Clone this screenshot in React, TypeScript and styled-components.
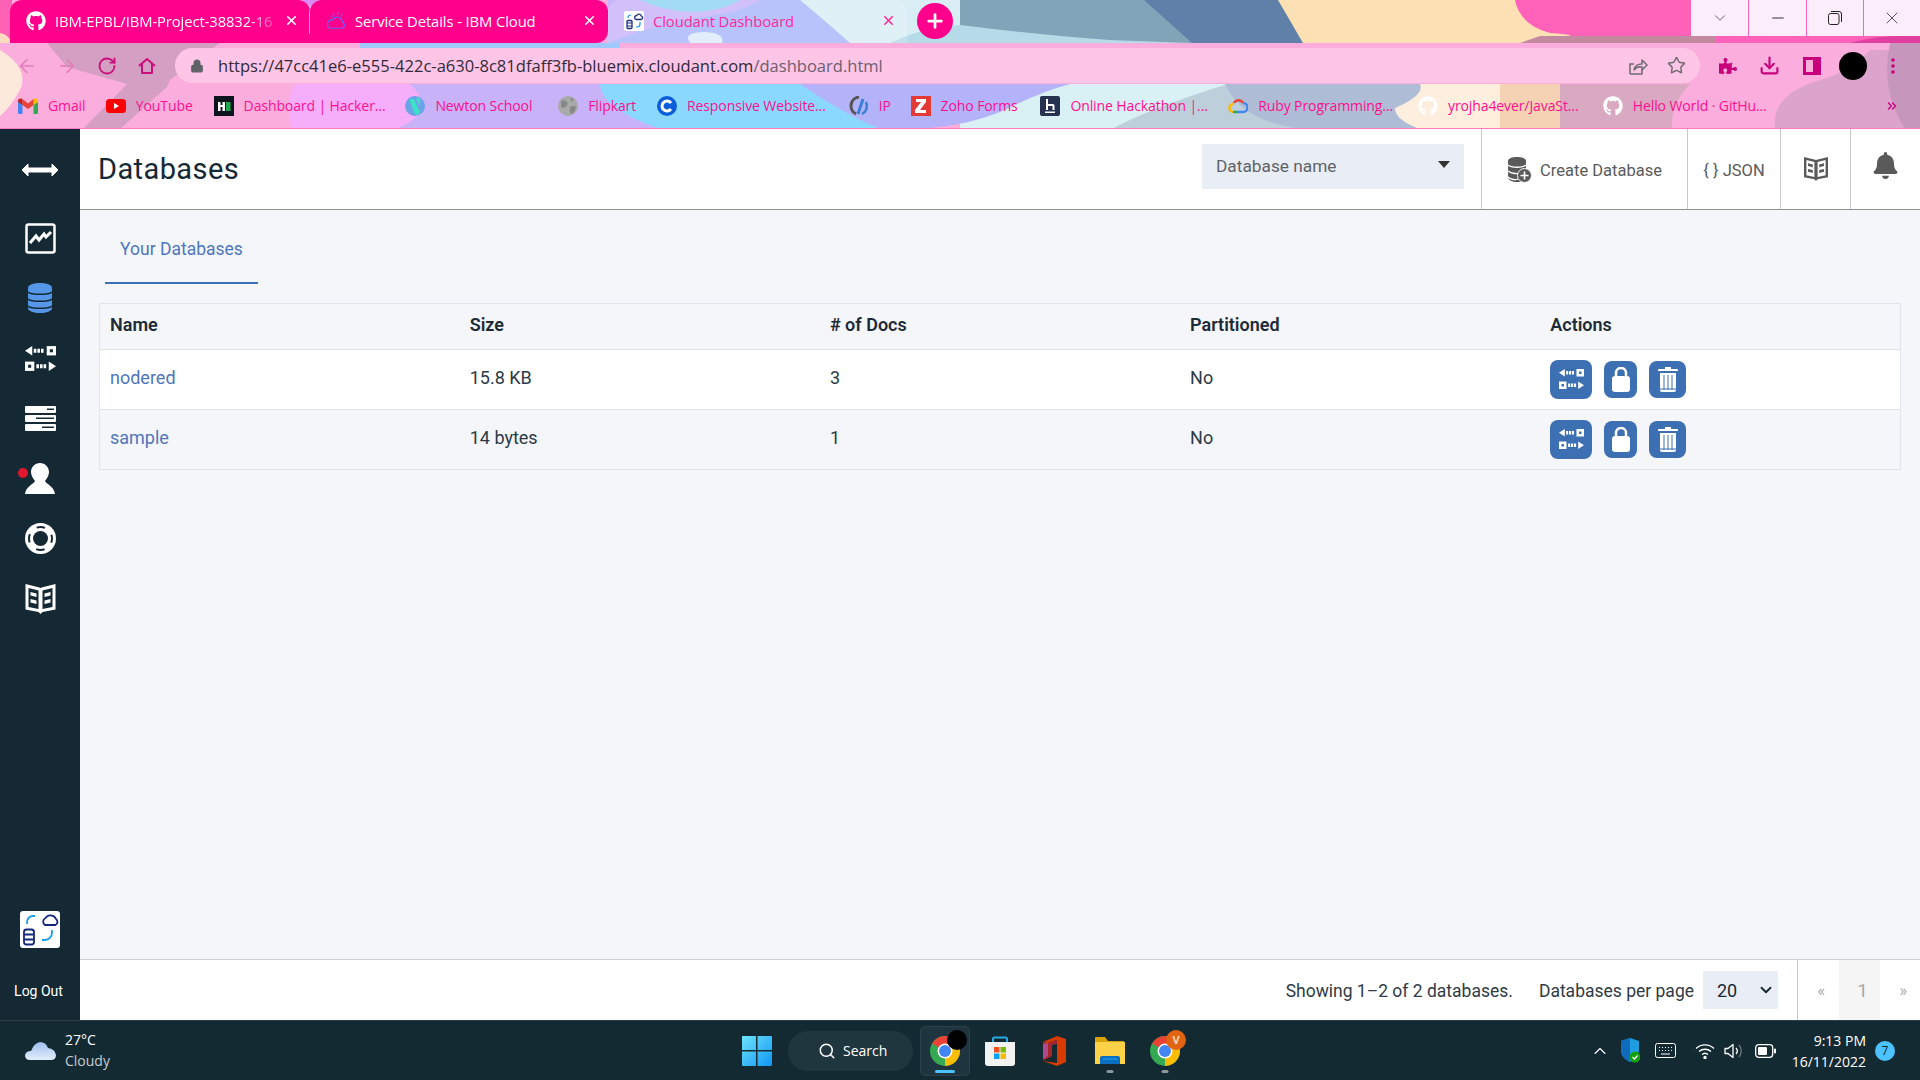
import React from "react";
import styled, { createGlobalStyle } from "styled-components";
import { FaGithub, FaBell, FaPuzzlePiece } from "react-icons/fa";
import { ArrowLeft, ArrowRight, RotateCw, Star, Download, X, Plus, Minus, ChevronDown, ChevronUp, Search, Lock, ChevronsRight } from "lucide-react";

const plex = `Roboto, "Noto Sans", sans-serif`;
const segoe = `"Open Sans", "Noto Sans", sans-serif`;

const Global = createGlobalStyle`
  html, body { margin: 0; padding: 0; width: 1920px; height: 1080px; overflow: hidden; background: #f5f6fa; }
  * { box-sizing: border-box; }
`;

const Page = styled.div`
  width: 1920px; height: 1080px; display: flex; flex-direction: column; overflow: hidden; font-family: ${plex};
`;

/* ---------- browser chrome ---------- */
const Chrome = styled.header`
  position: relative; height: 129px; flex: none; overflow: hidden; font-family: ${segoe};
`;
const WallpaperArt = styled.svg`
  position: absolute; left: 0; top: 0; width: 1920px; height: 130px;
`;
const TabStrip = styled.div`
  position: relative; height: 43px; display: flex; align-items: flex-start; padding-left: 10px;
`;
const Tab = styled.div<{ $w: number; $active?: boolean; $radius: string; $divider?: boolean }>`
  position: relative; width: ${p => p.$w}px; height: 43px; display: flex; align-items: center; padding: 0 11px 2px 16px; gap: 9px;
  border-radius: ${p => p.$radius};
  background: ${p => (p.$active ? "rgba(255,255,255,0.18)" : "#ff008c")};
  color: ${p => (p.$active ? "#ff2a9c" : "#fff")};
  &::before {
    content: ""; display: ${p => (p.$divider ? "block" : "none")}; position: absolute; left: -1px; top: 10px; width: 1px; height: 24px; background: #ff8ccb;
  }
`;
const TabIconSlot = styled.span`
  width: 20px; height: 20px; flex: none; display: flex; align-items: center; justify-content: center;
`;
const TabTitle = styled.span<{ $fade?: boolean }>`
  flex: 1; min-width: 0; white-space: nowrap; font-size: 14.8px; letter-spacing: -0.1px;
  ${p => (p.$fade ? "mask-image: linear-gradient(90deg, #000 88%, rgba(0,0,0,0.25));" : "")}
`;
const TabClose = styled.span`
  flex: none; display: flex; align-items: center; justify-content: center; width: 16px; height: 16px;
`;
const NewTab = styled.div`
  width: 36px; height: 36px; margin: 3px 0 0 10px; border-radius: 50%; background: #ff008c; color: #fff;
  display: flex; align-items: center; justify-content: center;
`;
const WindowButtons = styled.div`
  margin-left: auto; height: 36px; display: flex; background: #fbeefa;
`;
const WindowButton = styled.div<{ $divider?: boolean; $w: number }>`
  width: ${p => p.$w}px; height: 36px; display: flex; align-items: center; justify-content: center; color: #333;
  border-left: ${p => (p.$divider ? "1px solid #f565b8" : "none")};
`;

const ToolRow = styled.div`
  position: relative; height: 43px; display: flex; align-items: center; padding: 2px 0 0 0;
`;
const NavGroup = styled.div`
  width: 175px; flex: none; display: flex; align-items: center; padding-left: 14px; gap: 14px;
`;
const NavButton = styled.span<{ $off?: boolean }>`
  width: 26px; height: 26px; display: flex; align-items: center; justify-content: center;
  color: ${p => (p.$off ? "#e27cb6" : "#c80f7c")};
`;
const AddressBar = styled.div`
  width: 1525px; height: 35px; flex: none; border-radius: 18px; background: #fec5e6; display: flex; align-items: center; padding: 0 4px 0 15px; color: #5f6368;
`;
const UrlText = styled.span`
  margin-left: 14px; flex: 1; font-size: 16.55px; white-space: nowrap; color: #2f2a3a;
`;
const UrlPath = styled.span`
  color: #6b5f70;
`;
const BarAction = styled.span`
  width: 39px; display: flex; justify-content: center; color: #6e6a70;
`;
const ToolActions = styled.div`
  flex: 1; display: flex; align-items: center; padding-left: 10px; color: #c8007c;
`;
const ToolAction = styled.span<{ $w: number }>`
  width: ${p => p.$w}px; display: flex; justify-content: center; align-items: center;
`;
const Avatar = styled.span`
  width: 28px; height: 28px; border-radius: 50%; background: #000; display: block;
`;

const BookmarkBar = styled.nav`
  position: relative; height: 43px; display: flex; align-items: center; padding: 0 0 3px 18px; gap: 20.8px; border-bottom: 1px solid #fb78c4;
`;
const Bookmark = styled.span`
  display: flex; align-items: center; gap: 10px; color: #ff0f8f; font-size: 14px; white-space: nowrap;
`;
const BookmarkLabel = styled.span<{ $w: number }>`
  width: ${p => p.$w}px; display: block; overflow: visible; letter-spacing: -0.1px;
`;
const MoreBookmarks = styled.span`
  margin-left: auto; margin-right: 21px; color: #c8007c; display: flex;
`;

/* ---------- app ---------- */
const AppBody = styled.div`
  flex: 1; min-height: 0; display: flex;
`;
const Sidebar = styled.aside`
  width: 80px; flex: none; background: #152935; color: #fff; display: flex; flex-direction: column; align-items: center;
`;
const SideToggle = styled.div`
  height: 79px; width: 80px; padding-top: 2px; display: flex; align-items: center; justify-content: center;
`;
const SideItem = styled.div`
  position: relative; height: 60px; width: 80px; display: flex; align-items: center; justify-content: center;
`;
const RedDot = styled.span`
  position: absolute; left: 18px; top: 20px; width: 10px; height: 10px; border-radius: 50%; background: #e0182d;
`;
const SideBottom = styled.div`
  margin-top: auto; display: flex; flex-direction: column; align-items: center; padding-bottom: 20px; gap: 34px;
`;
const LogOut = styled.span`
  font-size: 14px; font-family: ${plex}; line-height: 18px; margin-left: -3px;
`;

const Main = styled.main`
  flex: 1; min-width: 0; display: flex; flex-direction: column; background: #f5f6fa;
`;
const TopBar = styled.div`
  height: 81px; flex: none; display: flex; align-items: stretch; background: #fff; border-bottom: 1px solid #8f9294;
`;
const Title = styled.h1`
  flex: 1; margin: 0; padding: 0 0 1px 18px; align-self: center; font-size: 29px; font-weight: 400; color: #152935; letter-spacing: 0.4px;
`;
const DbSelect = styled.div`
  align-self: flex-start; margin: 15px 17px 0 0; width: 262px; height: 45px; background: #e9eef6; display: flex; align-items: center; justify-content: space-between;
  padding: 0 14px 2px; color: #5f6368; font-size: 17.3px;
`;
const Caret = styled.span`
  width: 0; height: 0; border-left: 6px solid transparent; border-right: 6px solid transparent; border-top: 7px solid #333; margin-top: -2px;
`;
const HeaderCell = styled.div<{ $w: number }>`
  width: ${p => p.$w}px; flex: none; border-left: 1px solid #c9c9c9; display: flex; align-items: center; justify-content: center; gap: 8px; padding-top: 2px;
  color: #5a5a5a; font-size: 16.5px;
`;
const Pad = styled.span<{ $top: number }>`
  display: flex; margin-top: ${p => p.$top}px;
`;

const ContentTabs = styled.div`
  height: 74px; flex: none; padding-left: 25px; display: flex;
`;
const ContentTab = styled.div`
  width: 153px; height: 74px; display: flex; justify-content: center; padding-top: 29px; font-size: 17.5px; color: #4f76bb; border-bottom: 2px solid #3d70b2;
`;
const TableWrap = styled.div`
  margin: 19px 19px 0 19px; flex: none;
`;
const DbTable = styled.table`
  width: 100%; table-layout: fixed; border-collapse: collapse; border: 1px solid #e1e4ea; font-size: 18px; color: #2c3a45;
`;
const HeadRow = styled.tr`
  height: 46px; border-bottom: 1px solid #dfe2e6;
`;
const Th = styled.th`
  text-align: left; padding: 0 10px 4px; font-weight: 600; font-size: 18px; color: #1d2b36;
`;
const Row = styled.tr<{ $alt?: boolean }>`
  height: 60px; background: ${p => (p.$alt ? "#f5f6fa" : "#fff")}; border-bottom: 1px solid #dfe2e6;
`;
const Td = styled.td`
  padding: 0 10px 4px;
`;
const DbLink = styled.a`
  color: #4f76bb; text-decoration: none;
`;
const Actions = styled.div`
  display: flex; gap: 12px; align-items: center; margin-top: 3px;
`;
const ActionBtn = styled.span<{ $w: number; $h: number }>`
  width: ${p => p.$w}px; height: ${p => p.$h}px; border-radius: 8px; background: #3d70b2; display: flex; align-items: center; justify-content: center;
`;
const Footer = styled.div`
  margin-top: auto; height: 61px; flex: none; background: #fff; border-top: 1px solid #cfcfcf; display: flex; align-items: stretch; justify-content: flex-end;
  font-size: 17.5px; color: #2f3b45;
`;
const FooterText = styled.span<{ $mr: number }>`
  align-self: center; margin: 2px ${p => p.$mr}px 0 0; white-space: nowrap;
`;
const PerPage = styled.div`
  align-self: center; width: 75px; height: 38px; background: #e9eef6; margin-right: 19px; display: flex; align-items: center; justify-content: space-between; padding: 0 3px 0 14px; color: #152935; font-size: 18px;
`;
const Pager = styled.div`
  width: 123px; border-left: 1px solid #c9c9c9; display: flex; align-items: stretch;
`;
const PageCell = styled.span<{ $w: number; $current?: boolean }>`
  width: ${p => p.$w}px; display: flex; align-items: center; justify-content: center; color: #a9a9a9; padding-left: 6px;
  background: ${p => (p.$current ? "#f5f5f5" : "transparent")}; font-size: ${p => (p.$current ? 19 : 17)}px;
`;

/* ---------- taskbar ---------- */
const Taskbar = styled.footer`
  position: relative; height: 60px; flex: none; background: #142a32; border-top: 1px solid #2c3d46; color: #fff; display: flex; align-items: center; font-family: ${segoe};
`;
const Weather = styled.div`
  width: 742px; flex: none; display: flex; align-items: center; padding-left: 25px; gap: 9px;
`;
const WeatherText = styled.div`
  display: flex; flex-direction: column; font-size: 14px; line-height: 21px; margin-top: -1px;
`;
const Muted = styled.span`
  color: #c3cccf;
`;
const Center = styled.div`
  display: flex; align-items: center;
`;
const SearchPill = styled.div`
  margin: 0 7px 0 16px; width: 125px; height: 40px; border-radius: 20px; background: #20363f; display: flex; align-items: center; padding-left: 30px; gap: 7px; font-size: 14px;
`;
const AppSlot = styled.div<{ $w: number; $hover?: boolean }>`
  position: relative; width: ${p => p.$w}px; height: 50px; display: flex; align-items: center; justify-content: center; border-radius: 5px;
  background: ${p => (p.$hover ? "#1e3540" : "transparent")};
  border: ${p => (p.$hover ? "1px solid #2b424c" : "1px solid transparent")};
`;
const Running = styled.span<{ $active?: boolean }>`
  position: absolute; left: 50%; bottom: 2px; transform: translateX(-50%); height: 3px; border-radius: 2px;
  width: ${p => (p.$active ? 20 : 7)}px; background: ${p => (p.$active ? "#4cc2ff" : "#8b979c")};
`;
const BlackDot = styled.span`
  position: absolute; left: 26px; top: 3px; width: 20px; height: 20px; border-radius: 50%; background: #000;
`;
const OrangeBadge = styled.span`
  position: absolute; left: 25px; top: 3px; width: 20px; height: 20px; border-radius: 50%; background: #e06414; color: #fbd9b8; font-size: 11px; font-weight: 700; display: flex; align-items: center; justify-content: center;
`;
const Tray = styled.div`
  margin-left: auto; display: flex; align-items: center;
`;
const TrayIcon = styled.span<{ $w: number }>`
  width: ${p => p.$w}px; display: flex; justify-content: center;
`;
const Clock = styled.div`
  width: 78px; margin-left: 6px; text-align: right; font-size: 14px; line-height: 21px;
`;
const CountBadge = styled.span`
  width: 20px; height: 20px; border-radius: 50%; background: #4cc2ff; color: #0c2530; font-size: 12px; margin: 0 25px 0 9px; display: flex; align-items: center; justify-content: center;
`;

/* ---------- drawings ---------- */
const Wallpaper = () => (
  <WallpaperArt viewBox="0 0 1920 130" preserveAspectRatio="none">
    <rect width="1920" height="130" fill="#fbaedd" />
    <path d="M0 0H12V43H0Z" fill="#ff62b5" />
    <path d="M0 33Q8 34 12 43H0Z" fill="#fddcc0" />
    <path d="M300 0H322L311 6Z" fill="#d98cf5" />
    <path d="M0 50Q30 68 20 90Q10 108 0 116Z" fill="#fde9dc" />
    <path d="M47 43H220L170 80L167 87L120 129H83L127 84L67 67Z" fill="#d59fc4" />
    <path d="M295 84H560V129H292Q284 100 295 84Z" fill="#f6aefa" />
    <path d="M360 43H620V60H360Z" fill="#9fc8fb" />
    <path d="M410 84H650Q600 108 660 129H395Q440 112 410 84Z" fill="#c8b2f8" />
    <path d="M600 84H880Q840 112 890 129H660Q600 108 600 84Z" fill="#8ad8fe" />
    <path d="M960 84H1240L1128 129H960Z" fill="#d9f0f4" />
    <path d="M800 84H1070Q1040 92 1005 110Q960 129 905 129H880Q840 112 800 84Z" fill="#b4b2f9" />
    <path d="M1112 129Q1150 108 1228 84H1420V129Z" fill="#bccfda" />
    <path d="M1225 84H1425Q1440 95 1395 108Q1395 120 1420 129H1300Q1240 120 1225 84Z" fill="#aebdd5" />
    <path d="M1395 108Q1425 95 1420 84H1560V129H1420Q1395 120 1395 108Z" fill="#fdeedd" />
    <path d="M1500 84H1580V129H1500Z" fill="#f5d2b4" />
    <path d="M1560 84H1690Q1670 105 1672 129H1560Z" fill="#d9a9c2" />
    <path d="M1775 129Q1770 95 1820 80Q1850 72 1870 50H1920V129Z" fill="#dca4cc" />
    <path d="M1890 43H1920V129H1905Q1880 90 1890 43Z" fill="#c796bd" />
    <rect x="608" y="0" width="360" height="43" fill="#a9b6fb" />
    <path d="M608 0H760Q740 14 680 20Q640 30 608 43Z" fill="#c8b2fa" />
    <path d="M640 0H740Q720 12 690 12Q660 10 640 0Z" fill="#8fd4f3" />
    <path d="M690 43Q682 32 705 32Q725 33 722 43Z" fill="#dcebfa" />
    <path d="M800 0H965V43H850Q830 25 800 0Z" fill="#d8eef4" />
    <rect x="960" y="0" width="240" height="43" fill="#80a4b8" />
    <path d="M890 43Q920 28 960 25Q1040 35 1110 40L1190 43Z" fill="#b6dbe8" />
    <path d="M1144 0H1280L1305 43H1192Z" fill="#5f80a9" />
    <path d="M1278 0H1520L1540 43H1303Z" fill="#fde0b4" />
    <rect x="1510" y="0" width="410" height="43" fill="#ff62b8" />
    <path d="M1500 0H1515Q1520 25 1550 33Q1600 36 1530 43H1500Z" fill="#fde0b4" />
    <path d="M1540 36H1715V43H1520Z" fill="#c2899f" />
    <path d="M1850 43Q1880 34 1920 36V43Z" fill="#e03f9f" />
  </WallpaperArt>
);

const TabCloudLogo = () => (
  <svg width="20" height="20" viewBox="0 0 20 20">
    <rect width="20" height="20" rx="2" fill="#fff" />
    <path d="M12.500 8.500a2 2 0 0 1 .3-4 2.500 2.500 0 0 1 4.600.5 1.800 1.800 0 0 1-.2 3.500Z" fill="none" stroke="#1a2e7c" strokeWidth="1.300" />
    <rect x="3" y="9.500" width="5" height="8" rx="1" fill="none" stroke="#1a2e7c" strokeWidth="1.300" />
    <path d="M3 12h5M3 15h5" stroke="#1a2e7c" strokeWidth="1.100" />
    <path d="M4 7V6a3 3 0 0 1 3-2" stroke="#1e9de8" strokeWidth="1.200" fill="none" />
    <path d="M16 11v2a3 3 0 0 1-3 3h-1" stroke="#1e9de8" strokeWidth="1.200" fill="none" />
  </svg>
);
const IbmCloud = () => (
  <svg width="22" height="22" viewBox="0 0 22 22" fill="none">
    <path d="M5 19Q1 18 2 13Q3 9 7 10Q9 6 13 7Q18 8 18 12Q21 14 20 17Q19 19 17 19Z" stroke="#6a62ee" strokeWidth="1.300" />
    <path d="M8 2l1 3M13 1v3M18 3l-2 3M5 5l2 2" stroke="#6a62ee" strokeWidth="1.300" />
  </svg>
);
const Gmail = () => (
  <svg width="20" height="16" viewBox="0 0 20 16">
    <path d="M0 3v11.500q0 1.500 1.500 1.500H4.500V7Z" fill="#4285f4" />
    <path d="M20 3v11.500q0 1.500-1.500 1.500H15.500V7Z" fill="#34a853" />
    <path d="M15.500 1V7L20 4V2.500Q19.500 0 17 0.500Z" fill="#fbbc04" />
    <path d="M4.500 7V1L10 5.500 15.500 1V7L10 11Z" fill="#ea4335" />
    <path d="M0 2.500V4L4.500 7V1L3 .5Q.5 0 0 2.500Z" fill="#c5221f" />
  </svg>
);
const YouTube = () => (
  <svg width="20" height="14" viewBox="0 0 20 14"><rect width="20" height="14" rx="3.500" fill="#f00" /><path d="M8 4l5 3-5 3Z" fill="#fff" /></svg>
);
const HackerRank = () => (
  <svg width="20" height="20" viewBox="0 0 20 20">
    <rect width="20" height="20" fill="#0e141e" />
    <path d="M4 6h2.500v3h2V6H11v9H8.500v-4h-2v4H4Z" fill="#fff" />
    <rect x="12" y="6" width="4.500" height="9" fill="#1ba94c" />
  </svg>
);
const Newton = () => (
  <svg width="20" height="20" viewBox="0 0 20 20">
    <circle cx="10" cy="10" r="10" fill="#6aa3e8" />
    <path d="M5 3h4l6 13-2 3-3-1L5 6Z" fill="#3fe0c8" />
    <path d="M11 2h4v9Z" fill="#3fe0c8" />
  </svg>
);
const Globe = () => (
  <svg width="20" height="20" viewBox="0 0 20 20">
    <circle cx="10" cy="10" r="10" fill="#a9a9a9" />
    <path d="M3 5q4-2 6 1t-2 5q-2 2-4 0ZM12 11q4-2 6 0-1 6-5 7-2-3-1-7ZM12 2l4 1-2 3Z" fill="#888" />
  </svg>
);
const CircleC = () => (
  <svg width="20" height="20" viewBox="0 0 20 20">
    <circle cx="10" cy="10" r="10" fill="#0b5ed7" />
    <path d="M14 7a5 5 0 1 0 0 6" stroke="#fff" strokeWidth="3" fill="none" />
  </svg>
);
const IpLogo = () => (
  <svg width="20" height="20" viewBox="0 0 20 20" fill="none">
    <path d="M10 1a9 9 0 0 0-3 17" stroke="#555" strokeWidth="3" />
    <path d="M14 3L9 18" stroke="#3a7fd5" strokeWidth="3" />
    <path d="M17 6a9 9 0 0 1-4 12" stroke="#3a7fd5" strokeWidth="2.500" />
  </svg>
);
const Zoho = () => (
  <svg width="20" height="20" viewBox="0 0 20 20">
    <rect width="20" height="20" fill="#e53935" />
    <path d="M5 3h10v3l-6 8h6v3H4v-3l6-8H5Z" fill="#fff" />
  </svg>
);
const HackLogo = () => (
  <svg width="20" height="20" viewBox="0 0 20 20">
    <rect width="20" height="20" rx="2" fill="#273150" />
    <path d="M6 3h2v5h5q1.500 0 1.500 1.500V14h-2v-4H8v4H6Z" fill="#fff" />
    <rect x="5" y="15.500" width="10" height="1.500" fill="#fff" />
  </svg>
);
const GCloud = () => (
  <svg width="20" height="16" viewBox="0 0 20 16" fill="none">
    <path d="M6 5a5 5 0 0 1 9 0" stroke="#ea4335" strokeWidth="2.500" />
    <path d="M15 5a4.500 4.500 0 0 1 0 9H10" stroke="#4285f4" strokeWidth="2.500" />
    <path d="M10 14H5" stroke="#34a853" strokeWidth="2.500" />
    <path d="M5 14a4 4 0 0 1 1-8" stroke="#fbbc04" strokeWidth="2.500" />
  </svg>
);
const GhWhite = () => <FaGithub size={20} color="#fff" />;

const ShareIcon = () => (
  <svg width="20" height="20" viewBox="0 0 20 20" fill="none" stroke="currentColor" strokeWidth="1.500">
    <path d="M2 18V8h4M2 18h12v-4" />
    <path d="M6 14q1-6 8-6V4l5 5-5 5v-3q-5-1-8 3Z" strokeLinejoin="round" />
  </svg>
);
const HomeIcon = () => (
  <svg width="20" height="20" viewBox="0 0 20 20" fill="none" stroke="currentColor" strokeWidth="2">
    <path d="M2 10l8-7 8 7M5 8v9h10V8" strokeLinejoin="round" />
  </svg>
);
const SidePanel = () => (
  <svg width="18" height="18" viewBox="0 0 18 18">
    <path d="M0 0h18v18H0Z M3 3v12h7V3Z" fillRule="evenodd" fill="currentColor" />
  </svg>
);
const Dots = () => (
  <svg width="4" height="16" viewBox="0 0 4 16" fill="currentColor"><circle cx="2" cy="2" r="1.800" /><circle cx="2" cy="8" r="1.800" /><circle cx="2" cy="14" r="1.800" /></svg>
);

const Arrows = () => (
  <svg width="36" height="14" viewBox="0 0 36 14">
    <path d="M0 7L6 1V5H30V1L36 7L30 13V9H6V13Z" fill="#fff" stroke="#fff" strokeLinejoin="round" />
  </svg>
);
const Chart = () => (
  <svg width="31" height="31" viewBox="0 0 31 31" fill="none">
    <rect x="1.500" y="1.500" width="28" height="28" rx="2" stroke="#fff" strokeWidth="2.500" />
    <path d="M5 20L11 13L14 17L19 11L21 14L26 9" stroke="#fff" strokeWidth="3" />
  </svg>
);
const Db = ({ c = "#5596e6", bg = "#152935", w = 24, h = 30 }: { c?: string; bg?: string; w?: number; h?: number }) => (
  <svg width={w} height={h} viewBox="0 0 24 30">
    <path d="M0 5C0 1.500 6 0 12 0S24 1.500 24 5V25C24 28.500 18 30 12 30S0 28.500 0 25Z" fill={c} />
    <path d="M0 9C3 12 21 12 24 9M0 16C3 19 21 19 24 16M0 23C3 26 21 26 24 23" stroke={bg} strokeWidth="1.500" fill="none" />
  </svg>
);
const Replicate = ({ c = "#fff", bg = "#152935", w = 31, h = 25 }: { c?: string; bg?: string; w?: number; h?: number }) => (
  <svg width={w} height={h} viewBox="0 0 30 24">
    <path d="M0 4.500L7 0V9Z" fill={c} />
    <path d="M8.500 2.500h2.500v4H8.500ZM12 2.500h2.500v4H12ZM15.500 2.500h2.500v4h-2.500Z" fill={c} />
    <rect x="21" y="0" width="9" height="9" fill={c} />
    <rect x="24" y="3" width="3" height="3" fill={bg} />
    <rect x="0" y="15" width="9" height="9" fill={c} />
    <rect x="3" y="18" width="3" height="3" fill={bg} />
    <path d="M11 17.500h2.500v4H11ZM14.500 17.500h2.500v4h-2.500ZM18 17.500h2.500v4H18Z" fill={c} />
    <path d="M30 19.500L23 15V24Z" fill={c} />
  </svg>
);
const Rows = () => (
  <svg width="31" height="25" viewBox="0 0 31 25">
    <rect width="31" height="7" rx="1" fill="#fff" /><rect x="22" y="2.500" width="7" height="1.500" fill="#152935" />
    <rect y="9" width="31" height="7" rx="1" fill="#fff" /><rect x="11" y="11.500" width="18" height="1.500" fill="#152935" />
    <rect y="18" width="31" height="7" rx="1" fill="#fff" /><rect x="17" y="20.500" width="12" height="1.500" fill="#152935" />
  </svg>
);
const User = () => (
  <svg width="30" height="31" viewBox="0 0 30 31">
    <path d="M15 0C20 0 24 4 24 9C24 13 21.500 16 20 18C21 21 29 23 30 31H0C1 23 9 21 10 18C8.500 16 6 13 6 9C6 4 10 0 15 0Z" fill="#fff" />
  </svg>
);
const Lifesaver = () => (
  <svg width="31" height="31" viewBox="0 0 31 31" fill="none">
    <circle cx="15.500" cy="15.500" r="15.500" fill="#fff" />
    <circle cx="15.500" cy="15.500" r="7.500" fill="#152935" />
    <circle cx="15.500" cy="15.500" r="11.500" stroke="#152935" strokeWidth="2" strokeDasharray="8.500 9.560" strokeDashoffset="4.250" />
  </svg>
);
const Book = ({ c = "#fff", bg = "#152935", w = 31, h = 31 }: { c?: string; bg?: string; w?: number; h?: number }) => (
  <svg width={w} height={h} viewBox="0 0 30 31">
    <path d="M0 1L14 4.500L15 5L16 4.500L30 1V26.500L17 29L15 31L13 29L0 26.500Z" fill={c} />
    <path d="M3 5L13 7.500V26L3 24Z M27 5L17 7.500V26L27 24Z" fill={bg} />
    <path d="M5 9L11 10.500V14L5 12.500ZM5 16L11 17.500V21L5 19.500ZM25 9L19 10.500V14L25 12.500ZM25 16L19 17.500V21L25 19.500Z" fill={c} />
  </svg>
);
const SideLogo = () => (
  <svg width="40" height="37" viewBox="0 0 40 37" fill="none">
    <rect width="40" height="37" rx="3" fill="#fff" />
    <path d="M25 14a4 4 0 0 1 .5-7 6 6 0 0 1 10.500 1 3.500 3.500 0 0 1-.5 6Z" stroke="#12277c" strokeWidth="1.800" />
    <rect x="4" y="18.500" width="10" height="15" rx="2.500" stroke="#12277c" strokeWidth="1.800" />
    <path d="M4.500 23.500h9M4.500 28.500h9" stroke="#12277c" strokeWidth="1.800" />
    <path d="M7 13V11a6 6 0 0 1 6-6h2" stroke="#1e9de8" strokeWidth="1.800" />
    <path d="M32 19v3a7 7 0 0 1-7 7h-3" stroke="#1e9de8" strokeWidth="1.800" />
  </svg>
);
const CreateDb = () => (
  <svg width="25" height="26" viewBox="0 0 25 26">
    <path d="M1 4C1 1.500 5 0 10 0S19 1.500 19 4V20C19 23 15 25 10 25S1 23 1 20Z" fill="#5a5a5a" />
    <path d="M1 8C4 11 16 11 19 8M1 14C4 17 12 17 14 16M1 20C4 23 9 23 11 22" stroke="#fff" strokeWidth="1.300" fill="none" />
    <circle cx="17.500" cy="18.500" r="7" fill="#5a5a5a" stroke="#fff" strokeWidth="1" />
    <path d="M17.500 14.500v8M13.500 18.500h8" stroke="#fff" strokeWidth="1.600" />
  </svg>
);
const LockFill = () => (
  <svg width="18" height="25" viewBox="0 0 18 25">
    <path d="M4 9V6a5 5 0 0 1 10 0v3" stroke="#fff" strokeWidth="2.500" fill="none" />
    <rect y="9" width="18" height="16" rx="3" fill="#fff" />
  </svg>
);
const Trash = () => (
  <svg width="20" height="25" viewBox="0 0 20 25">
    <path d="M7 0h6v2h6q1 0 1 1v1H0V3q0-1 1-1h6Z" fill="#fff" />
    <path d="M2 6h16v17q0 2-2 2H4q-2 0-2-2Z" fill="#fff" />
    <path d="M6 8v15M10 8v15M14 8v15" stroke="#3d70b2" strokeWidth="1" />
    <path d="M2 22h16" stroke="#3d70b2" strokeWidth="1" />
  </svg>
);

const CloudIcon = () => (
  <svg width="31" height="20" viewBox="0 0 31 20">
    <defs><linearGradient id="cl" x1="0" y1="0" x2="0" y2="1"><stop offset="0" stopColor="#9fc0ee" /><stop offset="1" stopColor="#e2edfa" /></linearGradient></defs>
    <path d="M5 19Q0 19 0 14Q1 10 6 10Q9 2 15 1Q21 1 23 7Q30 8 31 14Q31 19 26 19Z" fill="url(#cl)" />
  </svg>
);
const WinLogo = () => (
  <svg width="30" height="30" viewBox="0 0 30 30">
    <defs><linearGradient id="wl" x1="0" y1="0" x2="1" y2="1"><stop offset="0" stopColor="#6fe4fb" /><stop offset="1" stopColor="#0f95f5" /></linearGradient></defs>
    <path d="M1 0h13v14H0V1q0-1 1-1ZM15.500 0H29q1 0 1 1v13H15.500ZM0 15.500h14V30H1q-1 0-1-1ZM15.500 15.500H30V29q0 1-1 1H15.500Z" fill="url(#wl)" />
  </svg>
);
const ChromeLogo = ({ s = 30 }: { s?: number }) => (
  <svg width={s} height={s} viewBox="4 4 40 40">
    <circle cx="24" cy="24" r="20" fill="#34a853" />
    <path d="M24 24L6.680 14A20 20 0 0 1 41.320 14Z" fill="#ea4335" />
    <path d="M24 24L41.320 14A20 20 0 0 1 24 44Z" fill="#fbbc04" />
    <circle cx="24" cy="24" r="10" fill="#fff" />
    <circle cx="24" cy="24" r="8" fill="#4285f4" />
  </svg>
);
const StoreIcon = () => (
  <svg width="30" height="30" viewBox="0 0 30 30">
    <path d="M8 6V3q0-1.500 1.500-1.500h11Q22 1.500 22 3v3" stroke="#27a9e8" strokeWidth="2" fill="none" />
    <path d="M0 6h30v21q0 3-3 3H3q-3 0-3-3Z" fill="#f2f2f2" />
    <rect x="9" y="11" width="5.500" height="5.500" fill="#f25022" /><rect x="15.500" y="11" width="5.500" height="5.500" fill="#7fba00" />
    <rect x="9" y="17.500" width="5.500" height="5.500" fill="#00a4ef" /><rect x="15.500" y="17.500" width="5.500" height="5.500" fill="#ffb900" />
  </svg>
);
const Office = () => (
  <svg width="23" height="30" viewBox="0 0 23 30">
    <path d="M14 0L23 3V26L14 30L0 25L14 27V4L5 7V20L0 23V6Z" fill="#d83b01" />
    <path d="M5 7L14 4V8L9 9V20L0 25V6Z" fill="#a4262c" />
    <path d="M0 8L5 7V20L0 23Z" fill="#b04a8c" />
  </svg>
);
const Folder = () => (
  <svg width="30" height="27" viewBox="0 0 30 27">
    <path d="M1 0h9l3 4h16v6H0V1q0-1 1-1Z" fill="#d9a20b" />
    <path d="M0 5h30v22H0Z" fill="#fdd247" />
    <path d="M5 27v-6q0-2 2-2h16q2 0 2 2v6Z" fill="#0a6fc2" />
    <path d="M8 22h14" stroke="#27a9e8" strokeWidth="1" />
  </svg>
);
const Shield = () => (
  <svg width="19" height="25" viewBox="0 0 19 25">
    <path d="M9 0L18 3V12Q18 20 9 24Q0 20 0 12V3Z" fill="#1f9de0" />
    <path d="M9 0V24Q0 20 0 12V3Z" fill="#0f6cbd" />
    <circle cx="14" cy="19" r="5.500" fill="#13a10e" />
    <path d="M11.500 19l2 2 3-3.500" stroke="#fff" strokeWidth="1.200" fill="none" />
  </svg>
);
const Keyboard = () => (
  <svg width="21" height="15" viewBox="0 0 21 15" fill="none" stroke="#fff">
    <rect x=".5" y=".5" width="20" height="14" rx="2" />
    <path d="M4 4.500h1M7 4.500h1M10 4.500h1M13 4.500h1M16 4.500h1M4 7.500h1M7 7.500h1M10 7.500h1M13 7.500h1M16 7.500h1M6 11h9" />
  </svg>
);
const Wifi = () => (
  <svg width="20" height="16" viewBox="0 0 20 16" fill="none" stroke="#fff" strokeWidth="1.400">
    <path d="M1 5.500a13 13 0 0 1 18 0M4 8.500a9 9 0 0 1 12 0M7 11.500a4.500 4.500 0 0 1 6 0" />
    <circle cx="10" cy="14.500" r="1" fill="#fff" />
  </svg>
);
const Speaker = () => (
  <svg width="20" height="20" viewBox="0 0 20 20" fill="none" stroke="#fff" strokeWidth="1.300">
    <path d="M1 7.500h3L9 3.500v13l-5-4H1Z" strokeLinejoin="round" />
    <path d="M12 7a4.500 4.500 0 0 1 0 6" />
    <path d="M15 4a9 9 0 0 1 0 12" stroke="#6d7a80" />
  </svg>
);
const Battery = () => (
  <svg width="21" height="14" viewBox="0 0 21 14">
    <rect x=".7" y=".7" width="17" height="12.600" rx="3" fill="none" stroke="#fff" strokeWidth="1.300" />
    <rect x="3" y="3" width="9" height="8" rx="1" fill="#fff" />
    <rect x="19" y="4.500" width="2" height="5" rx="1" fill="#fff" />
  </svg>
);

const bookmarks: [React.ReactNode, string, number][] = [
  [<Gmail />, "Gmail", 37],
  [<YouTube />, "YouTube", 57],
  [<HackerRank />, "Dashboard | Hacker...", 141],
  [<Newton />, "Newton School", 102],
  [<Globe />, "Flipkart", 48],
  [<CircleC />, "Responsive Website...", 141],
  [<IpLogo />, "IP", 11],
  [<Zoho />, "Zoho Forms", 79],
  [<HackLogo />, "Online Hackathon |...", 137],
  [<GCloud />, "Ruby Programming...", 139],
  [<GhWhite />, "yrojha4ever/JavaSt...", 134],
  [<GhWhite />, "Hello World · GitHu...", 139],
];

const rows = [
  { name: "nodered", size: "15.8 KB", docs: "3", part: "No" },
  { name: "sample", size: "14 bytes", docs: "1", part: "No" },
];

export default function App() {
  return (
    <Page>
      <Global />
      <Chrome>
        <Wallpaper />
        <TabStrip>
          <Tab $w={300} $radius="12px 12px 0 0">
            <TabIconSlot><FaGithub size={20} color="#fff" /></TabIconSlot>
            <TabTitle $fade>IBM-EPBL/IBM-Project-38832-16</TabTitle>
            <TabClose><X size={15} strokeWidth={2.5} /></TabClose>
          </Tab>
          <Tab $w={298} $radius="12px 12px 12px 0" $divider>
            <TabIconSlot><IbmCloud /></TabIconSlot>
            <TabTitle>Service Details - IBM Cloud</TabTitle>
            <TabClose><X size={15} strokeWidth={2.5} /></TabClose>
          </Tab>
          <Tab $w={299} $radius="12px 12px 0 0" $active>
            <TabIconSlot><TabCloudLogo /></TabIconSlot>
            <TabTitle>Cloudant Dashboard</TabTitle>
            <TabClose><X size={15} strokeWidth={2.5} /></TabClose>
          </Tab>
          <NewTab><Plus size={22} strokeWidth={3} /></NewTab>
          <WindowButtons>
            <WindowButton $w={57}><ChevronDown size={18} strokeWidth={1} /></WindowButton>
            <WindowButton $w={58} $divider><Minus size={18} strokeWidth={1.5} /></WindowButton>
            <WindowButton $w={57} $divider>
              <svg width="14" height="14" viewBox="0 0 14 14" fill="none" stroke="#222"><rect x=".5" y="2.500" width="10.500" height="11" rx="2" /><path d="M3 .5h8q2.500 0 2.500 2.500v8" /></svg>
            </WindowButton>
            <WindowButton $w={57} $divider><X size={20} strokeWidth={1} /></WindowButton>
          </WindowButtons>
        </TabStrip>
        <ToolRow>
          <NavGroup>
            <NavButton $off><ArrowLeft size={22} strokeWidth={1.6} /></NavButton>
            <NavButton $off><ArrowRight size={22} strokeWidth={1.6} /></NavButton>
            <NavButton><RotateCw size={20} strokeWidth={2.2} /></NavButton>
            <NavButton><HomeIcon /></NavButton>
          </NavGroup>
          <AddressBar>
            <Lock size={14} fill="#5f6368" />
            <UrlText>https://47cc41e6-e555-422c-a630-8c81dfaff3fb-bluemix.cloudant.com<UrlPath>/dashboard.html</UrlPath></UrlText>
            <BarAction><ShareIcon /></BarAction>
            <BarAction><Star size={19} strokeWidth={1.8} /></BarAction>
          </AddressBar>
          <ToolActions>
            <ToolAction $w={36}><FaPuzzlePiece size={18} /></ToolAction>
            <ToolAction $w={46}><Download size={21} strokeWidth={2.4} /></ToolAction>
            <ToolAction $w={40}><SidePanel /></ToolAction>
            <ToolAction $w={42}><Avatar /></ToolAction>
            <ToolAction $w={38}><Dots /></ToolAction>
          </ToolActions>
        </ToolRow>
        <BookmarkBar>
          {bookmarks.map(([icon, label, w]) => (
            <Bookmark key={label}>
              {icon}
              <BookmarkLabel $w={w}>{label}</BookmarkLabel>
            </Bookmark>
          ))}
          <MoreBookmarks><ChevronsRight size={14} strokeWidth={2.5} /></MoreBookmarks>
        </BookmarkBar>
      </Chrome>
      <AppBody>
        <Sidebar>
          <SideToggle><Arrows /></SideToggle>
          <SideItem><Chart /></SideItem>
          <SideItem><Db /></SideItem>
          <SideItem><Replicate /></SideItem>
          <SideItem><Rows /></SideItem>
          <SideItem><RedDot /><User /></SideItem>
          <SideItem><Lifesaver /></SideItem>
          <SideItem><Book /></SideItem>
          <SideBottom>
            <SideLogo />
            <LogOut>Log Out</LogOut>
          </SideBottom>
        </Sidebar>
        <Main>
          <TopBar>
            <Title>Databases</Title>
            <DbSelect>Database name<Caret /></DbSelect>
            <HeaderCell $w={206}><Pad $top={0}><CreateDb /></Pad>Create Database</HeaderCell>
            <HeaderCell $w={93}>{"{ } JSON"}</HeaderCell>
            <HeaderCell $w={70}><Pad $top={-4}><Book c="#5a5a5a" bg="#fff" w={24} h={25} /></Pad></HeaderCell>
            <HeaderCell $w={70}><Pad $top={-10}><FaBell size={27} color="#5a5a5a" /></Pad></HeaderCell>
          </TopBar>
          <ContentTabs><ContentTab>Your Databases</ContentTab></ContentTabs>
          <TableWrap>
            <DbTable>
              <thead>
                <HeadRow>
                  <Th>Name</Th><Th>Size</Th><Th># of Docs</Th><Th>Partitioned</Th><Th>Actions</Th>
                </HeadRow>
              </thead>
              <tbody>
                {rows.map((r, i) => (
                  <Row key={r.name} $alt={i % 2 === 1}>
                    <Td><DbLink>{r.name}</DbLink></Td>
                    <Td>{r.size}</Td>
                    <Td>{r.docs}</Td>
                    <Td>{r.part}</Td>
                    <Td>
                      <Actions>
                        <ActionBtn $w={42} $h={39}><Replicate c="#fff" bg="#3d70b2" w={25} h={20} /></ActionBtn>
                        <ActionBtn $w={33} $h={37}><LockFill /></ActionBtn>
                        <ActionBtn $w={37} $h={37}><Trash /></ActionBtn>
                      </Actions>
                    </Td>
                  </Row>
                ))}
              </tbody>
            </DbTable>
          </TableWrap>
          <Footer>
            <FooterText $mr={26}>Showing 1–2 of 2 databases.</FooterText>
            <FooterText $mr={9}>Databases per page</FooterText>
            <PerPage>20<ChevronDown size={18} strokeWidth={2.5} /></PerPage>
            <Pager>
              <PageCell $w={41}>«</PageCell>
              <PageCell $w={42} $current>1</PageCell>
              <PageCell $w={40}>»</PageCell>
            </Pager>
          </Footer>
        </Main>
      </AppBody>
      <Taskbar>
        <Weather>
          <CloudIcon />
          <WeatherText><span>27°C</span><Muted>Cloudy</Muted></WeatherText>
        </Weather>
        <Center>
          <WinLogo />
          <SearchPill><Search size={18} strokeWidth={2} />Search</SearchPill>
          <AppSlot $w={50} $hover>
            <ChromeLogo />
            <BlackDot />
            <Running $active />
          </AppSlot>
          <AppSlot $w={59}><StoreIcon /></AppSlot>
          <AppSlot $w={51}><Office /></AppSlot>
          <AppSlot $w={60}><Folder /><Running /></AppSlot>
          <AppSlot $w={50}>
            <ChromeLogo />
            <OrangeBadge>V</OrangeBadge>
            <Running />
          </AppSlot>
        </Center>
        <Tray>
          <TrayIcon $w={40}><ChevronUp size={20} strokeWidth={1.3} /></TrayIcon>
          <TrayIcon $w={20}><Shield /></TrayIcon>
          <TrayIcon $w={50}><Keyboard /></TrayIcon>
          <TrayIcon $w={30}><Wifi /></TrayIcon>
          <TrayIcon $w={28}><Speaker /></TrayIcon>
          <TrayIcon $w={34}><Battery /></TrayIcon>
          <Clock>9:13 PM<br />16/11/2022</Clock>
          <CountBadge>7</CountBadge>
        </Tray>
      </Taskbar>
    </Page>
  );
}
